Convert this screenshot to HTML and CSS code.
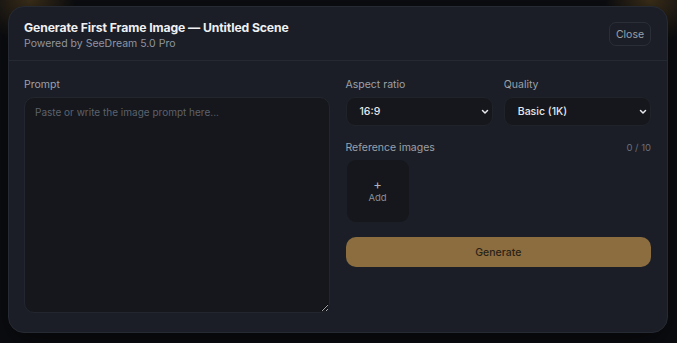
FILE: index.html
```html
<!DOCTYPE html>
<html lang="en">
<head>
  <meta charset="UTF-8">
  <title>Generate First Frame Image</title>
  <link rel="stylesheet" href="styles.css">
</head>
<body>

  <div class="modal">
    <div class="modal-header">
      <div>
        <h1>Generate First Frame Image — Untitled Scene</h1>
        <p class="subtitle">Powered by SeeDream 5.0 Pro</p>
      </div>
      <button class="close-btn">Close</button>
    </div>

    <div class="modal-body">
      <div class="field prompt-field">
        <label>Prompt</label>
        <textarea placeholder="Paste or write the image prompt here..."></textarea>
      </div>

      <div class="side">
        <div class="row-2">
          <div class="field">
            <label>Aspect ratio</label>
            <div class="select">
              <span>16:9</span>
              <svg width="8" height="6" viewBox="0 0 8 6"><path d="M1.5 1.5 4 4 6.5 1.5" fill="none" stroke="#e6e8ec" stroke-width="1.5" stroke-linecap="round" stroke-linejoin="round"/></svg>
            </div>
          </div>
          <div class="field">
            <label>Quality</label>
            <div class="select">
              <span>Basic (1K)</span>
              <svg width="8" height="6" viewBox="0 0 8 6"><path d="M1.5 1.5 4 4 6.5 1.5" fill="none" stroke="#e6e8ec" stroke-width="1.5" stroke-linecap="round" stroke-linejoin="round"/></svg>
            </div>
          </div>
        </div>

        <div class="field">
          <div class="label-row">
            <label>Reference images</label>
            <span class="count">0 / 10</span>
          </div>
          <div class="add-tile">
            <span class="plus">+</span>
            <span>Add</span>
          </div>
        </div>

        <button class="generate-btn">Generate</button>
      </div>
    </div>
  </div>

</body>
</html>
```

FILE: styles.css
```css
body {
  font-family: Inter, 'Noto Sans', sans-serif;
  background-color: #0c0d11;
  background-image:
    radial-gradient(circle at 30px 0px, rgba(150, 110, 40, 0.35), transparent 45px),
    radial-gradient(circle at 650px 0px, rgba(150, 110, 40, 0.35), transparent 45px);
  margin: 0;
  padding: 6px 9px 0 8px;
  height: 343px;
  box-sizing: border-box;
  overflow: hidden;
}

.modal {
  background: #1b1e26;
  border: 1px solid #262a33;
  border-radius: 16px;
  height: 327px;
  box-sizing: border-box;
  box-shadow: 0 10px 30px rgba(0,0,0,0.5);
}

.modal-header {
  display: flex;
  justify-content: space-between;
  align-items: flex-start;
  height: 54px;
  box-sizing: border-box;
  padding: 13px 16px 0 15px;
  border-bottom: 1px solid #252932;
}

.modal-header h1 {
  margin: 0;
  font-size: 12.2px;
  line-height: 15px;
  font-weight: 700;
  color: #eef0f3;
  letter-spacing: -0.1px;
}

.subtitle {
  margin: 2px 0 0;
  font-size: 10.5px;
  line-height: 13px;
  color: #8f95a0;
}

.close-btn {
  margin-top: 2px;
  font-family: inherit;
  font-size: 10.5px;
  color: #9aa0aa;
  background: #1b1e26;
  border: 1px solid #2a2e37;
  border-radius: 7px;
  width: 42px;
  height: 24px;
  padding: 0;
}

.modal-body {
  display: grid;
  grid-template-columns: 1fr 1fr;
  gap: 16px;
  padding: 17px 16px 0 15px;
}

.field {
  display: flex;
  flex-direction: column;
}

.field label {
  font-size: 10.5px;
  line-height: 13px;
  color: #9ba1ab;
  margin-bottom: 6px;
}

textarea {
  height: 216px;
  background: #15171c;
  border: 1px solid #23262e;
  border-radius: 10px;
  padding: 8px 10px;
  font-family: inherit;
  font-size: 10px;
  color: #e6e8ec;
  box-sizing: border-box;
}

textarea::placeholder {
  color: #5d626c;
}

.side {
  display: flex;
  flex-direction: column;
}

.row-2 {
  display: grid;
  grid-template-columns: 1fr 1fr;
  gap: 11px;
}

.select {
  height: 29px;
  box-sizing: border-box;
  background: #15171c;
  border: 1px solid #20232a;
  border-radius: 9px;
  display: flex;
  align-items: center;
  justify-content: space-between;
  padding: 0 3px 0 13px;
  font-size: 10.5px;
  font-weight: 500;
  color: #e6e8ec;
}

.label-row {
  display: flex;
  justify-content: space-between;
  align-items: center;
  margin-top: 15px;
}

.count {
  font-size: 9.5px;
  color: #6a707a;
  margin-bottom: 6px;
}

.add-tile {
  width: 62px;
  height: 62px;
  margin-left: 1px;
  background: #15171c;
  border-radius: 9px;
  display: flex;
  flex-direction: column;
  align-items: center;
  justify-content: center;
  gap: 2px;
  font-size: 9.5px;
  line-height: 11px;
  color: #8a909a;
}

.add-tile .plus {
  font-size: 13px;
  line-height: 11px;
  color: #aeb3bb;
}

.generate-btn {
  margin-top: 15px;
  height: 30px;
  background: #8c6d3f;
  border: none;
  border-radius: 10px;
  font-family: inherit;
  font-size: 10.5px;
  font-weight: 500;
  color: #2a2318;
}
```
